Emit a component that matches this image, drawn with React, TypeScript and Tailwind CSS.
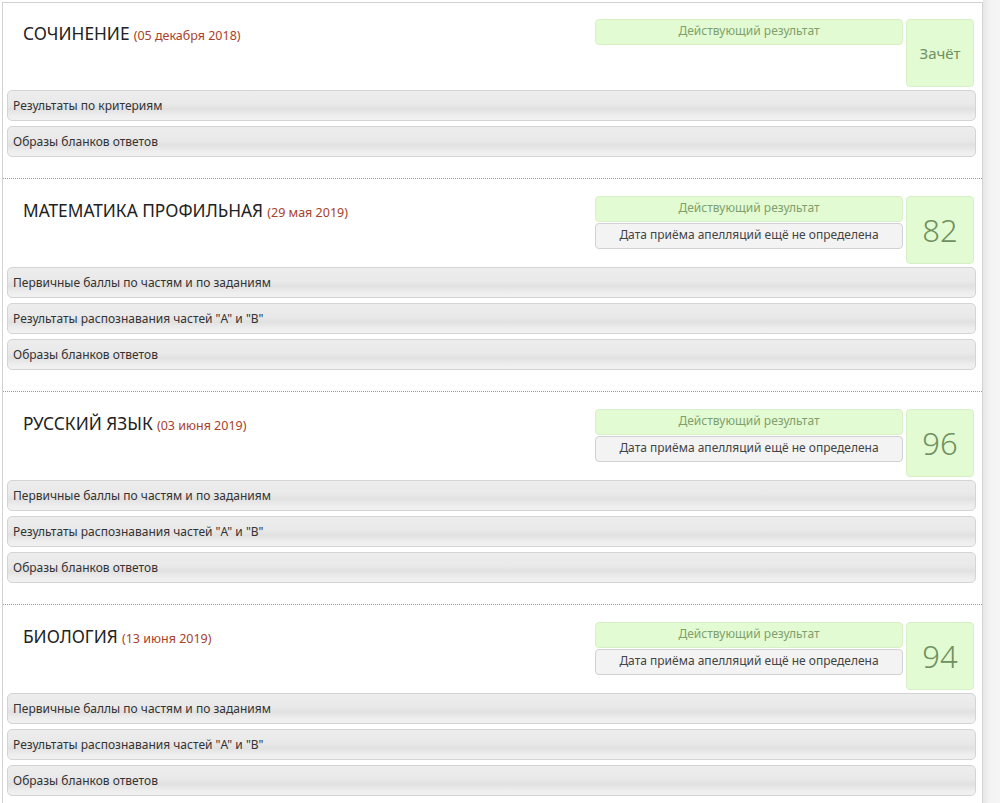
import React from "react";

type Exam = {
  title: string;
  date: string;
  score: string;
  appeal: boolean;
  rows: string[];
};

const exams: Exam[] = [
  {
    title: "СОЧИНЕНИЕ",
    date: "(05 декабря 2018)",
    score: "Зачёт",
    appeal: false,
    rows: ["Результаты по критериям", "Образы бланков ответов"],
  },
  {
    title: "МАТЕМАТИКА ПРОФИЛЬНАЯ",
    date: "(29 мая 2019)",
    score: "82",
    appeal: true,
    rows: [
      "Первичные баллы по частям и по заданиям",
      'Результаты распознавания частей "A" и "B"',
      "Образы бланков ответов",
    ],
  },
  {
    title: "РУССКИЙ ЯЗЫК",
    date: "(03 июня 2019)",
    score: "96",
    appeal: true,
    rows: [
      "Первичные баллы по частям и по заданиям",
      'Результаты распознавания частей "A" и "B"',
      "Образы бланков ответов",
    ],
  },
  {
    title: "БИОЛОГИЯ",
    date: "(13 июня 2019)",
    score: "94",
    appeal: true,
    rows: [
      "Первичные баллы по частям и по заданиям",
      'Результаты распознавания частей "A" и "B"',
      "Образы бланков ответов",
    ],
  },
];

function Section({ exam, first }: { exam: Exam; first: boolean }) {
  return (
    <div className={first ? "pt-[16px] pb-[21px]" : "border-t border-dotted border-[#9a9a9a] pt-[17px] pb-[21px]"}>
      <div className="flex justify-between pl-[20px] pr-[8px]">
        <div className="pt-[3px] leading-[24px] text-[#222]">
          <span className="text-[17.3px]">{exam.title}</span>{" "}
          <span className="text-[12.5px] text-[#a9412b]">{exam.date}</span>
        </div>
        <div className="flex gap-[3px]">
          <div className="flex w-[308px] flex-col gap-[1px]">
            <div className="flex h-[26px] items-center justify-center rounded-[4px] border border-[#d8f0c8] bg-[#e3fbd3] pb-[2px] text-[12px] text-[#7fa06d]">
              Действующий результат
            </div>
            {exam.appeal && (
              <div className="flex h-[26px] items-center justify-center rounded-[4px] border border-[#d2d2d2] bg-[#f3f3f3] pb-[2px] text-[12px] text-[#444]">
                Дата приёма апелляций ещё не определена
              </div>
            )}
          </div>
          <div
            className={
              "flex h-[68px] w-[68px] items-center justify-center rounded-[4px] border border-[#d8f0c8] bg-[#e3fbd3] text-[#6f9060] " +
              (exam.score.length > 2 ? "text-[15px]" : "text-[31px] font-light")
            }
          >
            {exam.score}
          </div>
        </div>
      </div>
      <div className="mt-[3px] ml-[4px] mr-[6px] flex flex-col gap-[5px]">
        {exam.rows.map((r) => (
          <div
            key={r}
            className="flex h-[31px] items-center rounded-[5px] border border-[#d4d4d4] bg-[linear-gradient(to_bottom,#ededed_0%,#e9e9e9_45%,#e1e1e1_62%,#eeeeee_85%,#f1f1f1_100%)] pl-[5px] text-[12px] text-[#333]"
          >
            {r}
          </div>
        ))}
      </div>
    </div>
  );
}

export default function App() {
  return (
    <div
      className="flex min-h-[803px] bg-white"
      style={{ fontFamily: '"Noto Sans", "Open Sans", sans-serif' }}
    >
      <div className="ml-[2px] mt-[2px] w-[981px] self-start border-l border-t border-r border-[#d3d3d3] bg-white">
        {exams.map((e, i) => (
          <Section key={e.title} exam={e} first={i === 0} />
        ))}
      </div>
      <div className="flex-1 bg-[linear-gradient(to_right,#e6e6e6,#f3f3f3_40%,#f5f5f5)]" />
    </div>
  );
}
